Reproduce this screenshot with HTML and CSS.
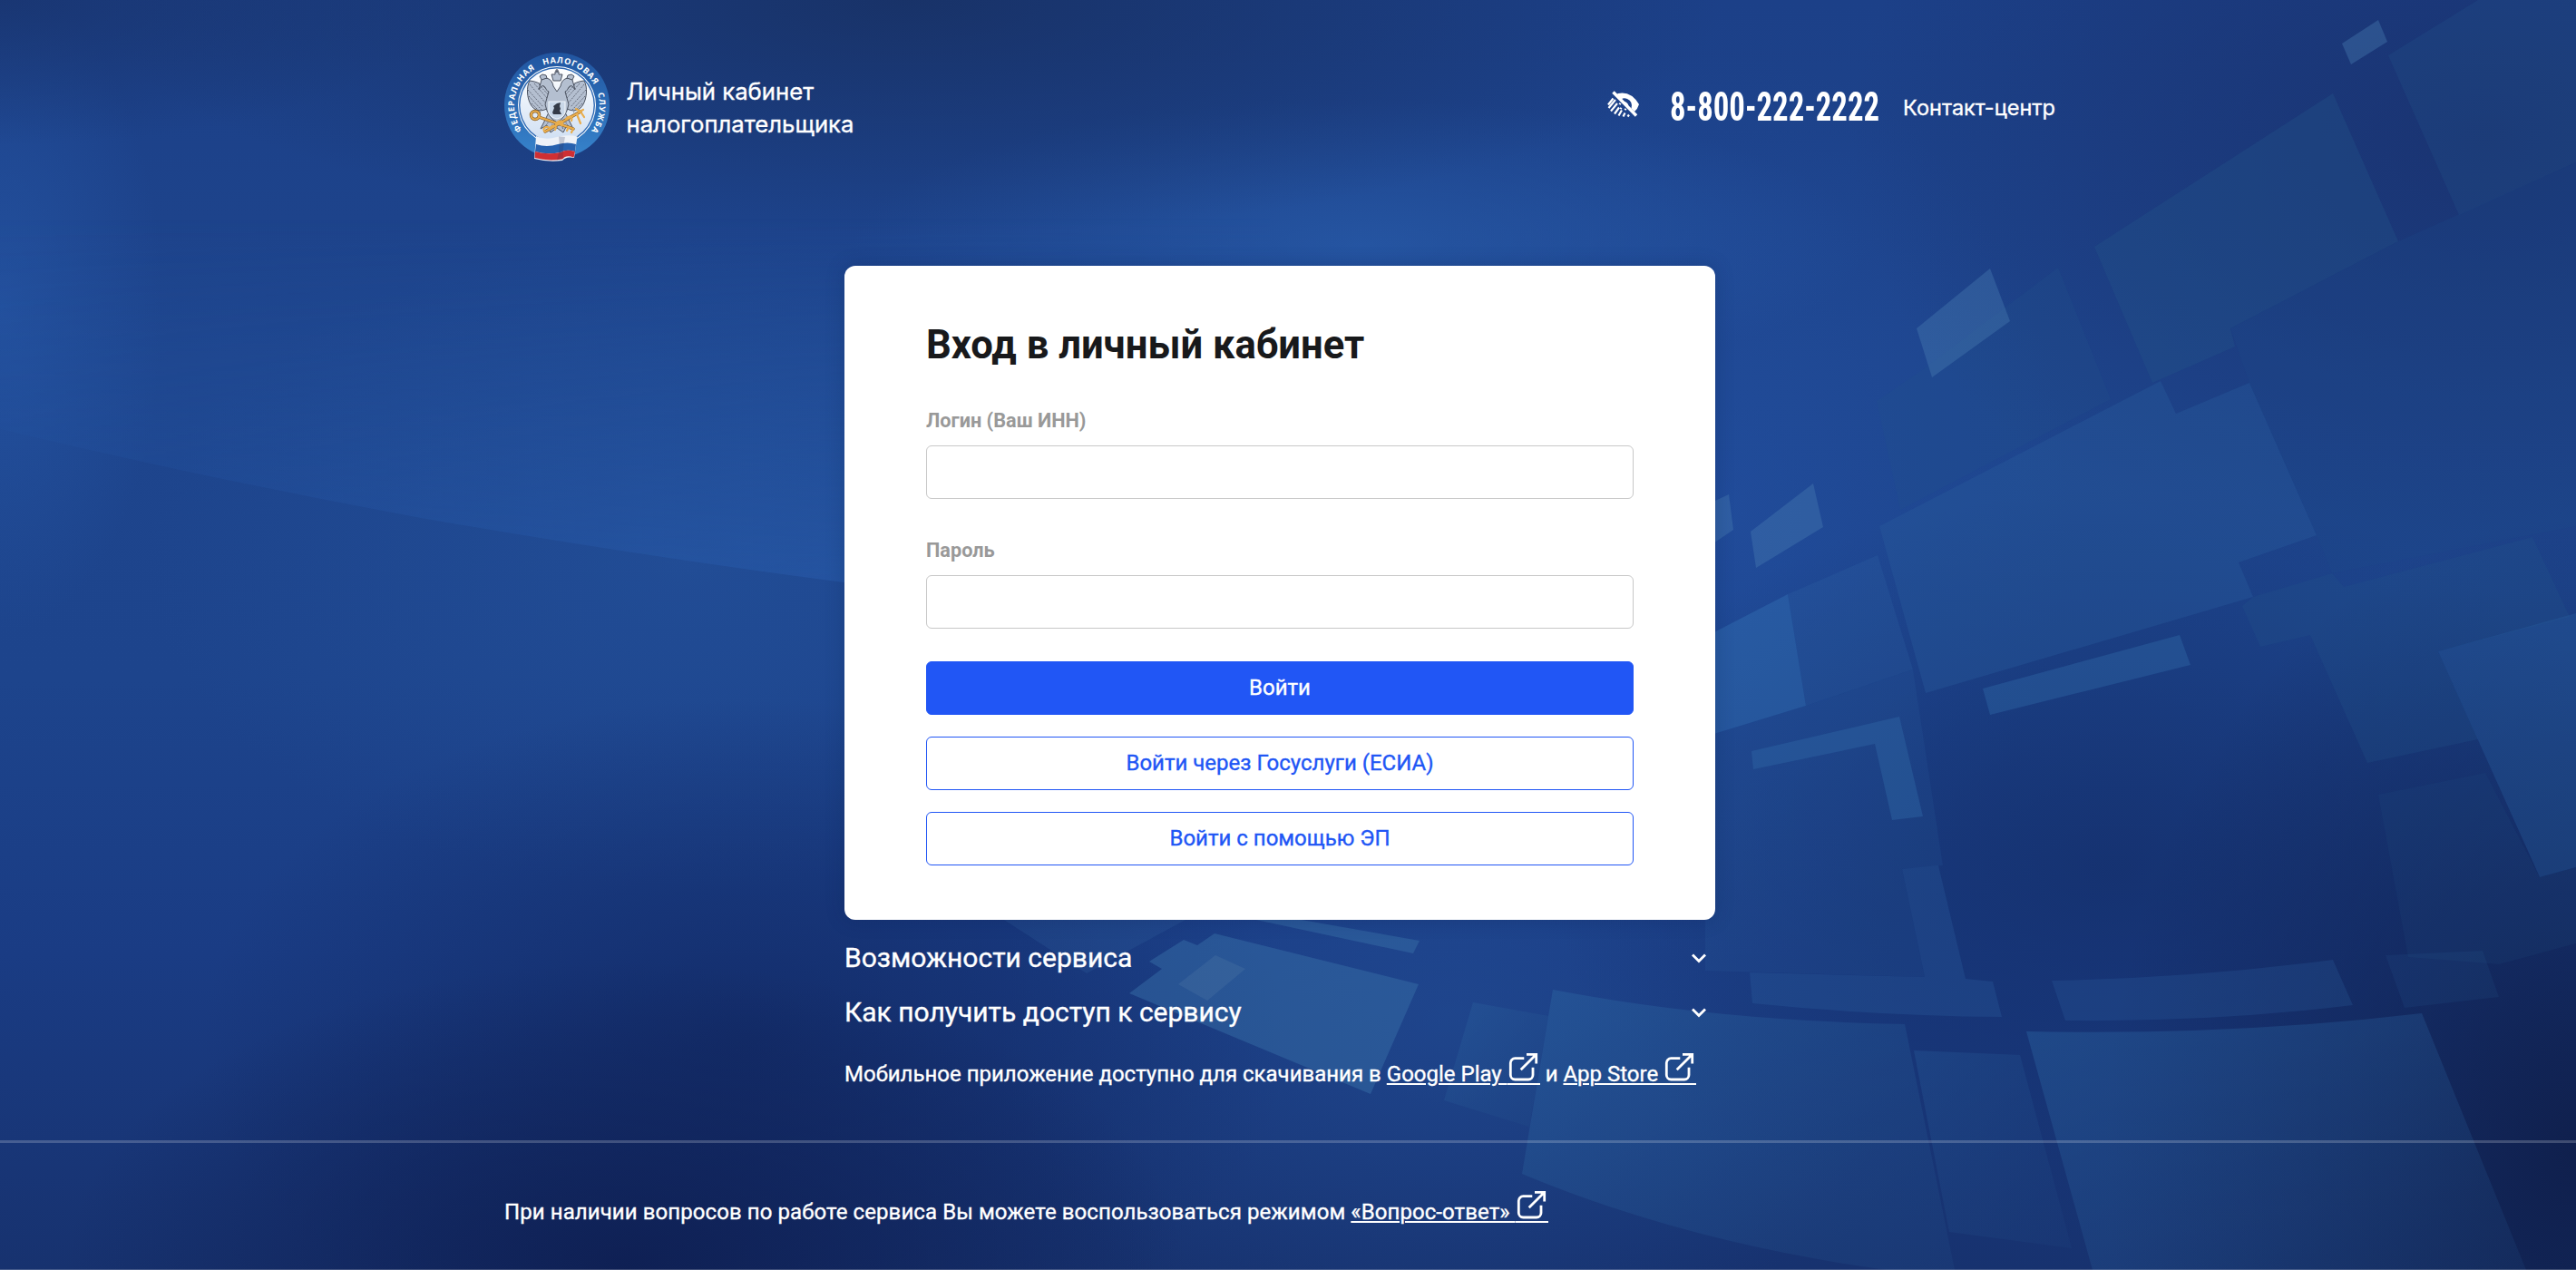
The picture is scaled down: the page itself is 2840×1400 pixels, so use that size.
FILE: index.html
```html
<!DOCTYPE html>
<html lang="ru">
<head>
<meta charset="utf-8">
<title>Личный кабинет налогоплательщика</title>
<link rel="stylesheet" href="styles.css">
</head>
<body>
<svg class="backdrop" viewBox="0 0 2840 1400" preserveAspectRatio="none" aria-hidden="true">
  <defs>
    <linearGradient id="wave" x1="0" y1="0" x2="1" y2="0">
      <stop offset="0" stop-color="#2658a8" stop-opacity=".3"/><stop offset="1" stop-color="#2a5eae" stop-opacity=".75"/>
    </linearGradient>
    <linearGradient id="waveFade" x1="0" y1="0" x2="0" y2="1">
      <stop offset="0" stop-color="#fff" stop-opacity="0"/><stop offset="1" stop-color="#fff"/>
    </linearGradient>
    <mask id="waveMask"><rect y="240" width="1400" height="460" fill="url(#waveFade)"/></mask>
    <linearGradient id="tile" x1="0" y1="0" x2="1" y2="1">
      <stop offset="0" stop-color="#2a62a0" stop-opacity=".5"/><stop offset="1" stop-color="#23508a" stop-opacity=".2"/>
    </linearGradient>
  </defs>
  <path mask="url(#waveMask)" fill="url(#wave)" d="M0 240H1400V700Q1160 672 930 642Q700 612 464 571Q230 528 0 473Z"/>
  <g fill="#23558a" fill-opacity=".26">
    <path d="M2633 61L2732 0H2840V179L2711 237Z"/>
    <path fill-opacity=".34" d="M2309 272L2572 103L2644 266L2459 362L2464 382L2373 422Z"/>
    <path fill-opacity=".2" d="M2069 442L2119 408L2269 295L2327 440L2095 562Z"/>
    <path fill="#28599a" fill-opacity=".4" d="M2072 580L2382 420L2399 456L2480 422L2554 590L2468 620L2484 658L2123 764Z"/>
    <path fill="#1f4b88" fill-opacity=".24" d="M2459 362L2644 266L2840 179V580L2571 632L2554 590L2480 422Z"/>
    <path d="M2484 658L2571 632L2584 647L2792 592L2833 680L2688 718L2732 815L2610 841L2547 700L2492 713L2472 668Z"/>
    <path fill="#2a62a0" fill-opacity=".34" d="M2688 718L2840 676V956L2800 967Z"/>
    <path fill-opacity=".14" d="M2622 876L2740 852L2800 967L2840 956V1040L2755 1063L2655 1055Z"/>
  </g>
  <g fill="#3068a8" fill-opacity=".42">
    <path d="M2186 759L2403 700L2415 733L2194 788Z"/>
    <path d="M1931 828L2094 790L2120 900L2086 904L2067 820L1933 848Z"/>
    <path fill="#2f6cb0" fill-opacity=".5" d="M1880 702L1971 655L1991 778L1880 812Z"/>
    <path fill-opacity=".22" d="M1971 655L2070 612L2109 738L1991 778Z"/>
    <path fill-opacity=".14" d="M1880 812L1991 778L2109 738L2142 954L2097 958L2122 1077L1880 1070Z"/>
    <path fill-opacity=".25" d="M2097 958L2137 954L2167 1079L2197 1082L2207 1121Q2070 1120 1932 1106L1929 1072L2122 1077Z"/>
    <path fill-opacity=".22" d="M2262 1081Q2420 1078 2572 1058L2594 1108Q2440 1127 2277 1125Z"/>
    <path fill-opacity=".12" d="M2630 1053L2737 1048L2755 1099L2651 1111Z"/>
  </g>
  <g fill="#4a7eb4" fill-opacity=".38">
    <path d="M2582 48L2622 22L2632 46L2592 71Z"/>
    <path d="M2113 362L2194 296L2216 354L2130 416Z"/>
    <path d="M1930 586L1999 533L2010 581L1936 626Z"/>
    <path d="M1880 557L1906 545L1911 584L1880 605Z"/>
  </g>
  <g fill="url(#tile)">
    <path d="M1712 1091Q1890 1125 2100 1129L2155 1400H2080Q1860 1370 1678 1294Z"/>
    <path fill-opacity=".8" d="M1624 1105L1707 1120L1686 1242L1592 1213Z"/>
    <path fill-opacity=".6" d="M2110 1158L2227 1163L2284 1376L2149 1358Z"/>
    <path fill-opacity=".9" d="M2234 1137Q2460 1142 2670 1117L2785 1400H2307Z"/>
  </g>
  <g fill="#356ba5" fill-opacity=".52">
    <path d="M1267 1060L1305 1036L1320 1042L1339 1029L1564 1085L1511 1206L1245 1095L1281 1068Z"/>
    <path d="M1385 1014H1435L1565 1037L1558 1051Z"/>
    <path fill-opacity=".22" d="M1107 1014H1307L1198 1073Z"/>
    <path fill="#5078a4" fill-opacity=".3" d="M1299 1085L1340 1053L1373 1068L1331 1103Z"/>
  </g>
</svg>

<header class="header">
  <div class="header-inner">
    <a class="brand">
      <svg class="emblem" viewBox="0 0 116 120">
        <defs>
          <linearGradient id="ring" x1="0" y1="0" x2="0" y2="1"><stop offset="0" stop-color="#2155a0"/><stop offset="1" stop-color="#3784cc"/></linearGradient>
          <linearGradient id="field" x1="0" y1="0" x2="0" y2="1"><stop offset="0" stop-color="#fff"/><stop offset="1" stop-color="#cfdff3"/></linearGradient>
          <path id="arc" d="M19.500 85.500A47 47 0 1 1 96 86"/>
        </defs>
        <circle cx="58" cy="58" r="58" fill="url(#ring)"/>
        <circle cx="58" cy="58" r="43" fill="#fff"/>
        <circle cx="58" cy="58" r="42" fill="#2c68b3"/>
        <circle cx="58" cy="58" r="40.6" fill="url(#field)"/>
        <text class="emblem-text"><textPath href="#arc" textLength="206">ФЕДЕРАЛЬНАЯ&#160;&#160; НАЛОГОВАЯ&#160;&#160; СЛУЖБА</textPath></text>
        <g fill="#b4bfd0" stroke="#4c5361" stroke-width="1">
          <path d="M50 45C44 35 36 32 28 31C24 38 25 50 29 57C33 65 42 66 50 60Z"/>
          <path d="M66 45C72 35 80 32 88 31C92 38 91 50 87 57C83 65 74 66 66 60Z"/>
          <path d="M49 66L40 84L47 80L51 88L58 83L65 88L69 80L76 84L67 66Z"/>
          <path d="M49 43C45 42 46 35 41 37L38 41L41 30C46 26 53 29 54 37L58 43L62 37C63 29 70 26 75 30L78 41L75 37C70 35 71 42 67 43L71 57Q68 72 58 77Q48 72 45 57Z"/>
          <path d="M54 31L52 24H56V21H60V24H64L62 31Z"/>
          <path d="M41 30L39 26L42 24L46 25L47 28ZM75 30L77 26L74 24L70 25L69 28Z"/>
        </g>
        <path d="M58 18V22M56 20H60" stroke="#4c5361" stroke-width="1.2"/>
        <g fill="none" stroke="#59606f" stroke-width=".9" stroke-dasharray="2 1.2">
          <path d="M28 35L45 55M26 41L43 60M27 48L41 63M30 56L40 66M33 34L47 50M38 35L48 46"/>
          <path d="M88 35L71 55M90 41L73 60M89 48L75 63M86 56L76 66M83 34L69 50M78 35L68 46"/>
          <path d="M50 74L45 82M54 76L51 85M58 78V83M62 76L65 85M66 74L71 82"/>
        </g>
        <path d="M49 54H67V66Q66 71 58 73Q50 71 49 66Z" fill="#c9d7e8" stroke="#edf3fa" stroke-width="1.2"/>
        <path d="M53 66L55 61L54 59L58 56L62 55L61 59L62 62L61 64L63 68H54Z" fill="#343a47"/>
        <g fill="none" stroke="#7d5520" stroke-width="3.4" stroke-linecap="round">
          <circle cx="34" cy="69" r="4.5"/><path d="M38 71L76 84M45 87L84 65"/>
        </g>
        <g fill="none" stroke="#e9ad4c" stroke-width="2.2" stroke-linecap="round">
          <circle cx="34" cy="69" r="4.5"/><path d="M38 71L76 84L74 88M71 82L69 86M45 87L84 65"/>
          <path d="M45 87C40 84 48 79 50 84C53 79 59 80 56 85M57 79C60 73 67 76 63 80M68 73C71 69 76 70 74 75M79 62L84 65L88 71M83 65L87 63M80 68L84 78"/>
        </g>
        <path d="M35 92Q46 97 58 93Q70 90 80.500 92.500L77 116Q68 114 64 119Q48 121 33 117Z" fill="#eef2f8"/>
        <path d="M35 101Q47 105 59 101Q70 98 79 101L78 109Q68 106 62 110Q47 113 34 109Z" fill="#2761ae"/>
        <path d="M34 109Q47 113 62 110Q68 106 78 109L76.500 115.500Q68 112 64 117.500Q48 120 33.500 116Z" fill="#cf2f33"/>
        <path d="M60 92.500L67 93Q64 106 65 116L58 118.500Q62 106 60 92.500Z" fill="#2b2f55" opacity=".22"/>
      </svg>
      <span class="brand-name">Личный кабинет<br>налогоплательщика</span>
    </a>
    <div class="contacts">
      <svg class="eye" viewBox="0 0 36 30">
        <g fill="none" stroke="#fff" stroke-width="2.200">
          <path d="M1 15.500L6.500 8.500M1.500 19L9 10M4 22.500L11 14M8 25.500L13 18.500M12.500 27.500L16 21.500M17.500 28.500L19.500 24.500M22.500 28.500L24 26.500"/>
        </g>
        <path d="M12 3Q26 0 35 15Q33.500 20 30 23L26.500 19.500Q28.500 12 22 9Q18 7.500 15.500 9.500L10.500 4Z" fill="#fff"/>
        <path d="M17.500 12Q22 11.500 23.500 16.500L21 15.500Z" fill="#fff"/>
        <path d="M13 14l2 1M14 19l2 1M19 20l2 1" stroke="#fff" stroke-width="1.800"/>
        <path d="M6.500 1.500L32 27.500" stroke="#fff" stroke-width="3.400"/>
      </svg>
      <a class="phone"><span>8-800-222-2222</span></a>
      <a class="contact-link">Контакт-центр</a>
    </div>
  </div>
</header>

<main class="main">
  <form class="card">
    <h1 class="title">Вход в личный кабинет</h1>
    <label class="field">Логин (Ваш ИНН)<input type="text"></label>
    <label class="field">Пароль<input type="password"></label>
    <div class="actions">
      <button class="btn btn-primary" type="button">Войти</button>
      <button class="btn" type="button">Войти через Госуслуги (ЕСИА)</button>
      <button class="btn" type="button">Войти с помощью ЭП</button>
    </div>
  </form>
  <div class="more">
    <div class="row">Возможности сервиса <svg class="chevron" viewBox="0 0 18 12"><path d="M2 2.500L9 9.500L16 2.500"/></svg></div>
    <div class="row">Как получить доступ к сервису <svg class="chevron" viewBox="0 0 18 12"><path d="M2 2.500L9 9.500L16 2.500"/></svg></div>
  </div>
  <p class="apps">Мобильное приложение доступно для скачивания в <a class="link">Google Play <svg class="ext" viewBox="0 0 36 34"><path d="M18.300 6.700H8.300a5 5 0 0 0-5 5V25a5 5 0 0 0 5 5H23a5 5 0 0 0 5-5V16.700M14.700 19.300L32 2M21 2.300H31.700V12.500"/></svg></a> и <a class="link">App Store <svg class="ext" viewBox="0 0 36 34"><path d="M18.300 6.700H8.300a5 5 0 0 0-5 5V25a5 5 0 0 0 5 5H23a5 5 0 0 0 5-5V16.700M14.700 19.300L32 2M21 2.300H31.700V12.500"/></svg></a></p>
</main>

<footer class="footer">
  <p class="footer-inner">При наличии вопросов по работе сервиса Вы можете воспользоваться режимом <a class="link">«Вопрос-ответ» <svg class="ext" viewBox="0 0 36 34"><path d="M18.300 6.700H8.300a5 5 0 0 0-5 5V25a5 5 0 0 0 5 5H23a5 5 0 0 0 5-5V16.700M14.700 19.300L32 2M21 2.300H31.700V12.500"/></svg></a></p>
</footer>
</body>
</html>
```
FILE: styles.css
```css
* { box-sizing: border-box; }

body {
  margin: 0;
  min-height: 1400px;
  display: flex;
  flex-direction: column;
  color: #fff;
  font: 400 24px/36px Roboto, "Liberation Sans", sans-serif;
  -webkit-text-stroke: .35px currentColor;
  background:
    radial-gradient(ellipse 620px 340px at 690px 1400px, rgba(13, 28, 78, .8), transparent),
    radial-gradient(ellipse 600px 380px at 820px 1150px, rgba(16, 38, 95, .65), transparent),
    radial-gradient(ellipse 520px 700px at 2840px 1270px, rgba(14, 28, 70, .85), transparent),
    radial-gradient(ellipse 620px 420px at 2330px 960px, rgba(19, 45, 104, .7), transparent),
    radial-gradient(ellipse 900px 260px at 1000px 0, rgba(23, 46, 94, .75), transparent),
    radial-gradient(ellipse 500px 160px at 0 0, rgba(24, 50, 106, .7), transparent),
    radial-gradient(ellipse 700px 500px at 2740px 150px, rgba(25, 48, 108, .8), transparent),
    radial-gradient(ellipse 180px 360px at 0 340px, rgba(40, 92, 174, .5), transparent),
    radial-gradient(ellipse 560px 160px at 1500px 270px, rgba(42, 96, 176, .6), transparent),
    radial-gradient(ellipse 380px 500px at 1900px 560px, rgba(36, 84, 170, .45), transparent),
    radial-gradient(ellipse 600px 360px at 760px 620px, rgba(38, 86, 160, .45), transparent),
    radial-gradient(ellipse 500px 400px at 1600px 1120px, rgba(36, 80, 152, .5), transparent),
    linear-gradient(180deg, #1c4088 0, #1e458d 400px, #1d448c 750px, #1a3c84 1050px, #17326f 1400px);
}

.backdrop {
  position: absolute;
  inset: 0;
  width: 100%;
  height: 1400px;
  z-index: -1;
}

.header { padding: 58px 18px 0 0; height: 293px; }

.header-inner {
  width: 1710px;
  margin: 0 auto;
  height: 120px;
  display: flex;
  justify-content: space-between;
}

.brand { display: flex; gap: 18.5px; font: 400 25.7px/36px Inter, "Liberation Sans", sans-serif; }
.brand-name { padding-top: 25px; }
.emblem { width: 116px; height: 120px; flex: none; }
.emblem-text { font: 700 9.2px "Open Sans", "Liberation Sans", sans-serif; fill: #fff; -webkit-text-stroke: 0; }

.contacts { display: flex; align-items: flex-start; }
.eye { width: 36px; height: 30px; margin: 42px 33px 0 0; }

.phone {
  width: 257px;
  padding-top: 37px;
  font: 700 43.5px/48px "Roboto Condensed", Roboto, sans-serif;
  -webkit-text-stroke: 0;
}
.phone span { display: inline-block; transform: scaleX(.8); transform-origin: 0 50%; white-space: nowrap; }

.contact-link { padding-top: 43px; font: 400 23.5px/36px Inter, "Liberation Sans", sans-serif; }

.main { width: 978px; margin: 0 auto; padding-right: 18px; }

.card {
  height: 721px;
  padding: 62px 90px 0;
  background: #fff;
  border-radius: 12px;
  box-shadow: 0 0 20px rgba(12, 32, 80, .25);
}

.title { margin: 0 0 39px; color: #18191b; font-size: 43.6px; line-height: 52px; -webkit-text-stroke: 0; }

.field {
  display: block;
  margin-bottom: 41px;
  color: #999;
  font-size: 21.7px;
  font-weight: 700;
  line-height: 36px;
  -webkit-text-stroke: 0;
}
.field input {
  display: block;
  width: 100%;
  height: 59px;
  margin-top: 9px;
  background: #fff;
  border: 1px solid #c8c8c8;
  border-radius: 6px;
}
.field + .field { margin-top: -2px; }

.actions { display: flex; flex-direction: column; gap: 24px; margin-top: -5px; }

.btn {
  height: 59px;
  padding: 0 0 2px;
  color: #2156f5;
  font: inherit;
  -webkit-text-stroke: inherit;
  background: #fff;
  border: 1px solid #2156f5;
  border-radius: 6px;
}
.btn-primary { color: #fff; background: #2156f5; }

.more { padding-top: 12px; font-size: 30px; }
.row { display: flex; justify-content: space-between; align-items: center; height: 60px; padding-right: 9px; }
.chevron { width: 18px; height: 12px; fill: none; stroke: #fff; stroke-width: 2.8; }

.apps { margin: 14px 0 0; white-space: nowrap; }

.link { text-decoration: underline; text-decoration-thickness: 2px; text-underline-offset: 2px; }
.ext {
  width: 36px;
  height: 36px;
  vertical-align: -4px;
  border-bottom: 2px solid #fff;
  fill: none;
  stroke: #fff;
  stroke-width: 2.8;
}

.footer {
  margin-top: auto;
  height: 143px;
  padding: 52px 18px 0 0;
  border-top: 3px solid rgba(255, 255, 255, .2);
  border-bottom: 1px solid rgba(255, 255, 255, .2);
}
.footer-inner { width: 1710px; margin: 0 auto; letter-spacing: .08px; }
```
